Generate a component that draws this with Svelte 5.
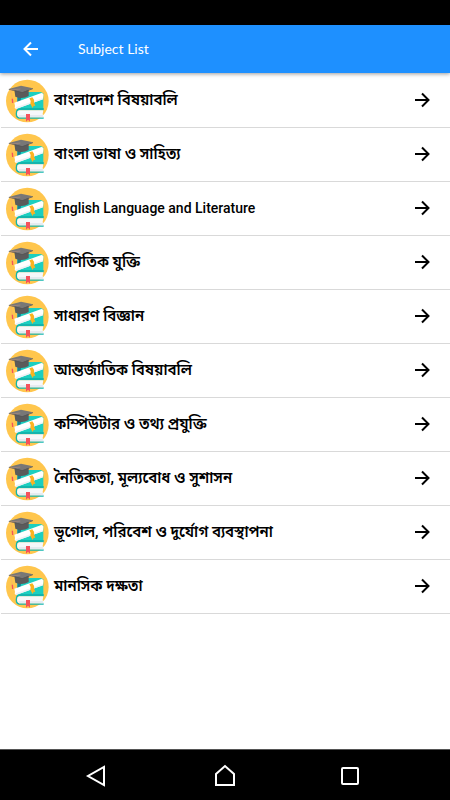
<script lang="ts">
  interface Subject {
    id: number;
    name: string;
    lang: string;
  }

  let subjects: Subject[] = [
    { id: 1, name: 'বাংলাদেশ বিষয়াবলি', lang: 'bn' },
    { id: 2, name: 'বাংলা ভাষা ও সাহিত্য', lang: 'bn' },
    { id: 3, name: 'English Language and Literature', lang: 'en' },
    { id: 4, name: 'গাণিতিক যুক্তি', lang: 'bn' },
    { id: 5, name: 'সাধারণ বিজ্ঞান', lang: 'bn' },
    { id: 6, name: 'আন্তর্জাতিক বিষয়াবলি', lang: 'bn' },
    { id: 7, name: 'কম্পিউটার ও তথ্য প্রযুক্তি', lang: 'bn' },
    { id: 8, name: 'নৈতিকতা, মূল্যবোধ ও সুশাসন', lang: 'bn' },
    { id: 9, name: 'ভূগোল, পরিবেশ ও দুর্যোগ ব্যবস্থাপনা', lang: 'bn' },
    { id: 10, name: 'মানসিক দক্ষতা', lang: 'bn' },
  ];
</script>

<div class="screen">
  <div class="status-bar"></div>

  <header>
    <button class="back" aria-label="Back">
      <svg width="24" height="24" viewBox="0 0 24 24" fill="none" stroke="currentColor" stroke-width="2">
        <path d="M20 12H7M13 5.500L6.500 12l6.500 6.500" />
      </svg>
    </button>
    <h1>Subject List</h1>
  </header>

  <main>
    <ul>
      {#each subjects as subject (subject.id)}
        <li>
          <button class="row">
            <svg class="badge" viewBox="18 18 132 132" aria-hidden="true">
              <circle cx="82" cy="84" r="64" fill="#ffc64d" />
              <!-- standing book -->
              <path d="M52 68L64 68L84 57H122L130 61V112H52Z" fill="#1ccfc0" />
              <path d="M53 66H64L62 84L52 88Z" fill="#167f96" />
              <!-- lying book -->
              <path d="M52 107L62 105H131V112H57Q51 113 51 122Q51 131 57 133H131V137H57Q47 136 47 122Q47 111 52 107Z" fill="#13b5ad" />
              <path d="M57 112H130Q126 122 131 133H57Q51 131 51 122Q51 113 57 112Z" fill="#f6f8fa" />
              <path d="M56 126H128L131 133H57Z" fill="#e6ebf0" />
              <path d="M78 123H90V146L84 140L78 146Z" fill="#f4525c" />
              <!-- scroll with ribbon -->
              <path d="M43 89L124 60Q132 61 130 69L129 79L50 107Q42 108 45 99Z" fill="#fff" />
              <path d="M47 103L129 75V79L50 107Q46 108 47 103Z" fill="#eef1f4" />
              <path d="M88 76L97 73Q104 80 102 88L106 99L101 98L98 105L91 93Q94 83 88 76Z" fill="#fbb321" />
              <!-- cap -->
              <path d="M43 50L86 49V69Q67 80 46 71Z" fill="#5b5b5b" />
              <path d="M26 48L63 38L99 46L67 58Z" fill="#777" />
              <path d="M26 48L67 58L99 46V48L67 60L27 50Z" fill="#555" />
              <path d="M61 48L32 51L37 78" fill="none" stroke="#e9a28b" stroke-width="1" />
              <path d="M35 77H39L40 90H36Z" fill="#f4525c" />
            </svg>
            <span class="name" lang={subject.lang}>{subject.name}</span>
            <svg class="arrow" width="24" height="24" viewBox="0 0 24 24" fill="none" stroke="currentColor" stroke-width="2" aria-hidden="true">
              <path d="M4 11H17M11 4.500L17.500 11L11 17.500" />
            </svg>
          </button>
        </li>
      {/each}
    </ul>
  </main>

  <nav aria-label="System">
    <button aria-label="Back">
      <svg width="24" height="24" viewBox="0 0 24 24" fill="none" stroke="currentColor" stroke-width="2">
        <path d="M20 4V22L4 13Z" />
      </svg>
    </button>
    <button aria-label="Home">
      <svg width="24" height="24" viewBox="0 0 24 24" fill="none" stroke="currentColor" stroke-width="2">
        <path d="M3 22V11L12 3L21 11V22Z" />
      </svg>
    </button>
    <button aria-label="Recent apps">
      <svg width="24" height="24" viewBox="0 0 24 24" fill="none" stroke="currentColor" stroke-width="2">
        <rect x="0" y="5" width="16" height="16" rx="1" />
      </svg>
    </button>
  </nav>
</div>

<style>
  :global(body) { margin: 0; background: #fff; }

  .screen {
    display: flex;
    flex-direction: column;
    min-height: 100vh;
    font-family: Lato, "Noto Sans Bengali", "Noto Sans", sans-serif;
    color: #000;
  }
  button {
    border: 0;
    padding: 0;
    background: none;
    color: inherit;
    font: inherit;
    cursor: pointer;
  }
  svg { display: block; flex: none; overflow: visible; }

  .status-bar { height: 25px; background: #000; }

  header {
    display: flex;
    align-items: center;
    gap: 36px;
    height: 48px;
    padding-left: 18px;
    background: #1e90ff;
    color: #fff;
    box-shadow: 0 1px 4px rgba(0, 0, 0, 0.4);
  }
  h1 {
    margin: 0;
    padding-bottom: 2px;
    font-size: 14px;
    font-weight: 400;
  }

  main { flex: 1; padding-top: 1px; }
  ul { margin: 0; padding: 0 0 0 1px; list-style: none; }
  li { border-bottom: 1px solid #d9d9d9; }
  .row {
    display: flex;
    align-items: center;
    gap: 4px;
    width: 100%;
    height: 53px;
    padding: 0 15px 0 5px;
    text-align: left;
  }
  .badge { width: 44px; height: 44px; }
  .name {
    flex: 1;
    padding-bottom: 1px;
    font-family: Roboto, "Noto Sans Bengali", "Noto Sans", sans-serif;
    font-size: 15px;
    font-weight: 600;
    line-height: 20px;
  }
  .name:lang(en) { font-size: 14px; font-weight: 500; }

  nav {
    display: flex;
    justify-content: space-around;
    align-items: center;
    height: 51px;
    padding: 0 32px;
    border-top: 1px solid #555;
    box-sizing: border-box;
    background: #000;
    color: #fff;
  }
</style>
